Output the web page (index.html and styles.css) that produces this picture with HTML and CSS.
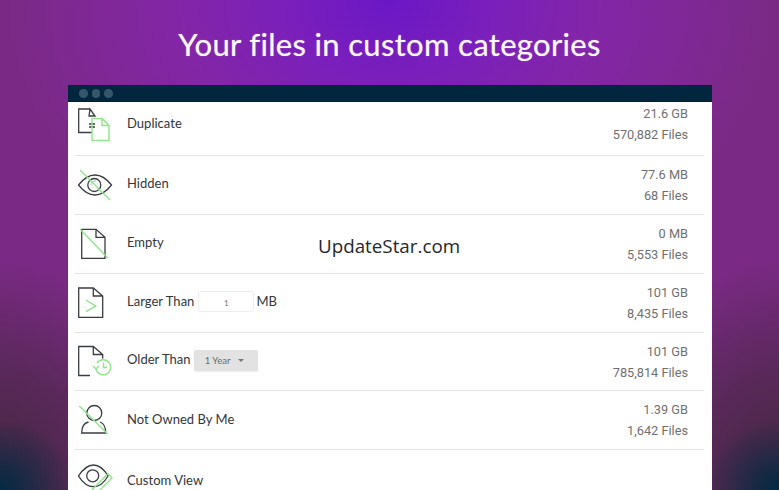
FILE: index.html
```html
<!DOCTYPE html>
<html lang="en">
<head>
<meta charset="utf-8">
<title>Your files in custom categories</title>
<link rel="stylesheet" href="styles.css">
</head>
<body>
<div class="stage">
  <h1 class="headline">Your files in custom categories</h1>
  <section class="window">
    <div class="titlebar"><i class="dot"></i><i class="dot"></i><i class="dot"></i></div>
    <div class="list">
      <div class="row row-first">
        <svg class="icon" viewBox="0 0 36 40" fill="none"><path class="ink" d="M12 5H.7v23.500H14M12 5l5 7h-6zM11 20h6M11 23h6"/><path class="lime" d="M14 14.500h10l7 7v15H14zM24 14.500v7h7"/></svg>
        <div class="label"><span>Duplicate</span></div>
        <div class="stats"><span>21.6 GB</span><span>570,882 Files</span></div>
      </div>
      <div class="row">
        <svg class="icon" viewBox="0 0 36 40" fill="none"><path class="ink" d="M.5 20C6 13 11 10 17 10S28 13 33.500 20C28 27 23 30 17 30S6 27 .5 20z"/><circle class="ink" cx="16.300" cy="20" r="6.500"/><path class="blue" d="M13 20a4 4 0 0 1 5-4"/><path class="lime" d="M2 5l30 30"/></svg>
        <div class="label"><span>Hidden</span></div>
        <div class="stats"><span>77.6 MB</span><span>68 Files</span></div>
      </div>
      <div class="row">
        <svg class="icon" viewBox="0 0 36 40" fill="none"><path class="ink" d="M3.700 5.300H18l9 8v21H3.700zM18 5.300v8h9"/><path class="lime" d="M2 5l27.700 29"/></svg>
        <div class="label"><span>Empty</span></div>
        <div class="stats"><span>0 MB</span><span>5,553 Files</span></div>
      </div>
      <div class="row">
        <svg class="icon" viewBox="0 0 36 40" fill="none"><path class="ink" d="M.7 5h14.600l9.400 8v21.300H.7zM15.300 5v8h9.400"/><path class="lime" d="M8 17l9.700 6L8 28.700"/></svg>
        <div class="label"><span>Larger Than</span><span class="field">1</span><span>MB</span></div>
        <div class="stats"><span>101 GB</span><span>8,435 Files</span></div>
      </div>
      <div class="row row-short">
        <svg class="icon" viewBox="0 0 36 40" fill="none"><path class="ink" d="M12 33.500H.7V4.500h14.600l9.400 8v4M15.300 4.500v8h9.400"/><path class="lime" d="M19 21a7.500 7.500 0 1 1-1.300 5M15 24l3 3 3-3M25.500 20.500v5H29"/></svg>
        <div class="label"><span>Older Than</span><span class="select">1 Year<i class="caret"></i></span></div>
        <div class="stats"><span>101 GB</span><span>785,814 Files</span></div>
      </div>
      <div class="row">
        <svg class="icon" viewBox="0 0 36 40" fill="none"><circle class="ink" cx="16.300" cy="13" r="7.500"/><path class="ink" d="M10.500 22C6 23 3.700 27 3.700 33h24c0-6-2.700-10-5.700-11"/><path class="lime" d="M1.300 6l28.400 28"/></svg>
        <div class="label label-low"><span>Not Owned By Me</span></div>
        <div class="stats"><span>1.39 GB</span><span>1,642 Files</span></div>
      </div>
      <div class="row row-last">
        <svg class="icon" viewBox="0 0 36 40" fill="none"><path class="ink" d="M.5 17C5 10 10 6 15.500 6S26 10 30 17C26 24 21 27.700 15.500 27.700S5 24 .5 17z"/><circle class="ink" cx="14.700" cy="16.800" r="6"/><path class="lime" d="M12 33l18-18.500 4 4.500-15 15"/></svg>
        <div class="label"><span>Custom View</span></div>
      </div>
    </div>
  </section>
  <div class="watermark">UpdateStar.com</div>
</div>
</body>
</html>
```
FILE: styles.css
```css
html, body { margin: 0; padding: 0; }
body { width: 779px; height: 490px; overflow: hidden; font-family: "Lato", sans-serif; }
.stage {
  position: relative;
  width: 779px;
  height: 490px;
  overflow: hidden;
  background:
    radial-gradient(ellipse 75px 70px at 0 100%, rgba(3,42,68,1) 0, rgba(3,42,68,.55) 45%, rgba(3,42,68,0) 100%),
    radial-gradient(ellipse 75px 70px at 100% 100%, rgba(3,42,68,1) 0, rgba(3,42,68,.55) 45%, rgba(3,42,68,0) 100%),
    radial-gradient(ellipse 170px 230px at 0 100%, rgba(66,40,60,1) 0, rgba(66,40,60,.6) 50%, rgba(66,40,60,0) 100%),
    radial-gradient(ellipse 170px 230px at 100% 100%, rgba(66,40,60,1) 0, rgba(66,40,60,.6) 50%, rgba(66,40,60,0) 100%),
    radial-gradient(ellipse 390px 300px at 50% 0, #6a17c6 0, #7a1fbc 25%, #8326a6 55%, rgba(122,42,134,0) 100%),
    #7a2a84;
}
.headline {
  margin: 0;
  height: 85px;
  padding-top: 25px;
  box-sizing: border-box;
  text-align: center;
  font-size: 31px;
  line-height: 38px;
  font-weight: 400;
  letter-spacing: .33px;
  color: #fbf7fd;
  text-shadow: 0 0 1px rgba(255,255,255,.6);
}
.window { margin: 0 67px 0 68px; background: #fff; height: 405px; overflow: hidden; }
.titlebar {
  height: 15px;
  padding: 1px 0 0 11px;
  background: #03263f;
  border-bottom: 1px solid #0a1a28;
  display: flex;
  align-items: center;
  gap: 4px;
}
.dot { width: 8.500px; height: 8.500px; border-radius: 50%; background: #35566a; }
.list { padding: 0 8px 0 7px; }
.row {
  display: flex;
  align-items: center;
  height: 58px;
  border-bottom: 1px solid #e4e4e4;
}
.row-first { height: 43px; padding-bottom: 10px; }
.row-first .label { padding-bottom: 2px; }
.row-short { height: 57px; }
.row-short .label { padding-bottom: 6px; }
.row-last { border-bottom: 0; }
.row-last .label { padding: 2px 0 0; }
.label-low { padding-bottom: 2px; }
.icon { width: 36px; height: 40px; margin: 0 13px 0 3px; flex: none; }
.ink { stroke: #3a3d42; stroke-width: 1.3; }
.lime { stroke: #8fe58a; stroke-width: 1.4; }
.blue { stroke: #9cc4dc; stroke-width: 1; }
.label {
  flex: 1;
  display: flex;
  align-items: center;
  gap: 3px;
  font-size: 13px;
  color: #33363a;
  letter-spacing: .02px;
}
.label:not(.label-low) { padding-bottom: 4px; }
.row-first .label:not(.label-low) { padding-bottom: 2px; }
.row-short .label:not(.label-low) { padding-bottom: 6px; }
.row-last .label:not(.label-low) { padding: 2px 0 0; }
.field {
  width: 54px;
  height: 19px;
  margin: 0 -1px 0 1px;
  border: 1px solid #eee;
  border-radius: 3px;
  text-align: center;
  font-size: 8px;
  line-height: 22px;
  color: #777;
}
.select {
  width: 64px;
  height: 21px;
  margin-top: 4px;
  border-radius: 2px;
  background: #e2e2e2;
  box-shadow: 0 1px 2px rgba(0,0,0,.08);
  font-size: 9.500px;
  line-height: 22px;
  color: #6c6c6c;
  padding-left: 11px;
  box-sizing: border-box;
  display: flex;
  align-items: center;
  gap: 8px;
}
.caret { border: 3px solid transparent; border-top-color: #777; border-bottom: 0; }
.stats {
  display: flex;
  flex-direction: column;
  align-items: flex-end;
  gap: 4px;
  padding-right: 16px;
  font-family: "Roboto", sans-serif;
  font-size: 12.750px;
  line-height: 17px;
  color: #707070;
}
.watermark {
  position: absolute;
  left: 318px;
  top: 233px;
  font-family: "Open Sans", sans-serif;
  font-size: 18.800px;
  line-height: 27px;
  color: #24272b;
}
```
